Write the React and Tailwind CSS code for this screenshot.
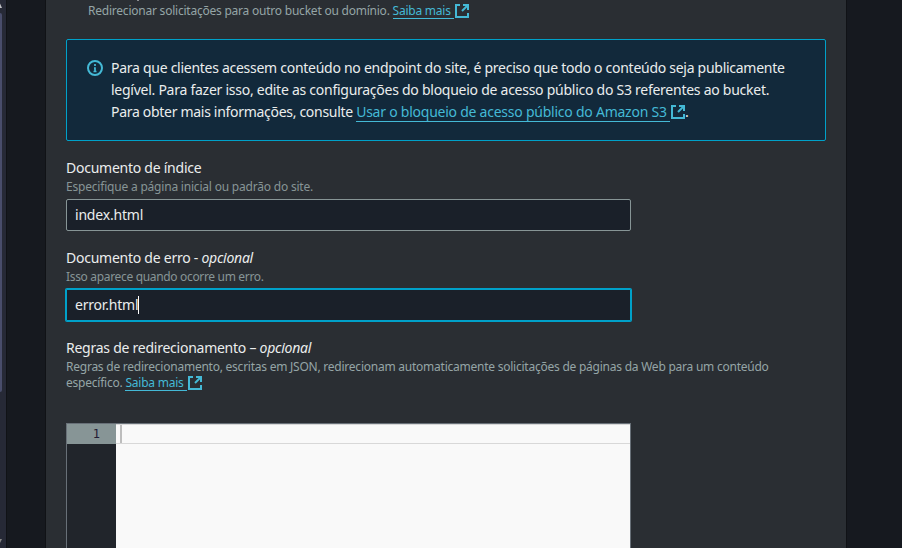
import React from 'react';

function ExternalIcon({ className = '' }) {
  return (
    <svg viewBox="0 0 14 14" className={`h-3.5 w-3.5 shrink-0 ${className}`} fill="none" stroke="#44b9d6" strokeWidth="2">
      <path d="M5 1H1v12h12V9" />
      <path d="M8 1h5v5" />
      <path d="M13 1L7 7" />
    </svg>
  );
}

function Link({ children, className = '' }) {
  return <span className={`shrink-0 whitespace-pre border-b border-[#44b9d6] text-[#44b9d6] ${className}`}>{children}</span>;
}

function Field({ label, optional, hint, children }) {
  return (
    <div>
      <div className="h-[22px] whitespace-pre text-sm leading-[22px] tracking-[-0.25px] text-[#eaeded]">
        {label}
        {optional}
      </div>
      {hint}
      {children}
    </div>
  );
}

export default function App() {
  return (
    <div className="flex h-[548px] w-[902px] overflow-hidden bg-[#16191f] font-['Noto_Sans','Open_Sans',sans-serif]">
      <div className="flex w-[6px] shrink-0 flex-col bg-[#262936]">
        <svg className="h-[13px] w-[6px]" viewBox="0 0 6 13"><path d="M-3 8L0 3.5L2 8Z" fill="#c0c0c4" /></svg>
        <div className="h-[379px] w-[2px] rounded-r-sm bg-[#494d6b]" />
        <div className="flex-1" />
        <svg className="h-[10px] w-[6px]" viewBox="0 0 6 10"><path d="M-2 1L0 5L2 1Z" fill="#868686" /></svg>
      </div>
      <div className="w-[40px] shrink-0 border-x border-[#101216] bg-[#16191f]" />
      <main className="flex w-[800px] shrink-0 flex-col overflow-hidden bg-[#2a2e33] pl-5">
        <div className="ml-[71px] h-px w-[2px] shrink-0 bg-[#8c8f91]" />
        <div className="flex h-[38px] shrink-0 items-start pl-[22px] pt-0.5 text-xs leading-4 tracking-[-0.225px] text-[#95a5a6]">
          <span className="whitespace-pre">Redirecionar solicitações para outro bucket ou domínio. </span>
          <Link className="h-4">Saiba mais </Link>
          <ExternalIcon className="ml-px mt-px" />
        </div>
        <section className="flex h-[102px] w-[760px] shrink-0 rounded-[2px] border border-[#00a1c9] bg-[#12293b] pl-5 pt-[17px] text-sm leading-[22px] text-[#eaeded]">
          <svg viewBox="0 0 16 16" className="mr-2 mt-[3px] h-4 w-4 shrink-0" fill="none" stroke="#44b9d6" strokeWidth="2">
            <circle cx="8" cy="8" r="7" />
            <path d="M8 4v2M7 8h1v4M6.5 11.5h3" strokeWidth="1.7" />
          </svg>
          <div className="whitespace-nowrap">
            <div className="tracking-[-0.275px]">Para que clientes acessem conteúdo no endpoint do site, é preciso que todo o conteúdo seja publicamente</div>
            <div className="tracking-[-0.26px]">legível. Para fazer isso, edite as configurações do bloqueio de acesso público do S3 referentes ao bucket.</div>
            <div className="flex">
              <span className="whitespace-pre tracking-[-0.3px]">Para obter mais informações, consulte </span>
              <Link className="h-[21px] tracking-[-0.24px]">Usar o bloqueio de acesso público do Amazon S3 </Link>
              <ExternalIcon className="ml-px mt-1" />
              <span>.</span>
            </div>
          </div>
        </section>
        <div className="mt-4 h-[90px] shrink-0">
          <Field label="Documento de índice" hint={<div className="h-5 text-xs leading-4 tracking-[-0.2px] text-[#879596]">Especifique a página inicial ou padrão do site.</div>}>
            <div className="h-8 w-[565px] rounded-[2px] border border-[#879596] bg-[#1a2029] pl-2 text-sm leading-[30px] tracking-[-0.2px] text-[#eaeded]">index.html</div>
          </Field>
        </div>
        <div className="h-[90px] shrink-0">
          <Field label="Documento de erro - " optional={<i>opcional</i>} hint={<div className="h-5 text-xs leading-4 tracking-[-0.33px] text-[#879596]">Isso aparece quando ocorre um erro.</div>}>
            <div className="flex h-8 w-[565px] items-center rounded-[1px] border border-[#00a1c9] bg-[#1a2029] pl-2 text-sm tracking-[-0.2px] text-[#eaeded] ring-1 ring-[#00a1c9]">
              error.html
              <span className="h-[18px] w-px bg-white" />
            </div>
          </Field>
        </div>
        <Field
          label="Regras de redirecionamento – "
          optional={<i>opcional</i>}
          hint={
            <div className="whitespace-nowrap text-xs leading-4 text-[#95a5a6]">
              <div className="tracking-[-0.238px]">Regras de redirecionamento, escritas em JSON, redirecionam automaticamente solicitações de páginas da Web para um conteúdo</div>
              <div className="flex tracking-[-0.225px]">
                <span className="whitespace-pre">específico. </span>
                <Link className="h-4">Saiba mais </Link>
                <ExternalIcon className="ml-px mt-px" />
              </div>
            </div>
          }
        />
        <div className="mt-8 flex h-[140px] w-[565px] shrink-0 border border-[#687078] bg-[#f9f9f9]">
          <div className="w-[49px] shrink-0 bg-[#21252b]">
            <div className="h-5 bg-[#879596] pr-4 text-right font-['DejaVu_Sans_Mono','Liberation_Mono',monospace] text-xs leading-5 text-[#231c33]">1</div>
          </div>
          <div className="flex-1">
            <div className="h-5 border-y border-[#d8d8d8] pl-1">
              <div className="h-full w-[2px] bg-[#bdbdbd]" />
            </div>
          </div>
        </div>
      </main>
      <div className="w-px shrink-0 bg-[#101216]" />
    </div>
  );
}
